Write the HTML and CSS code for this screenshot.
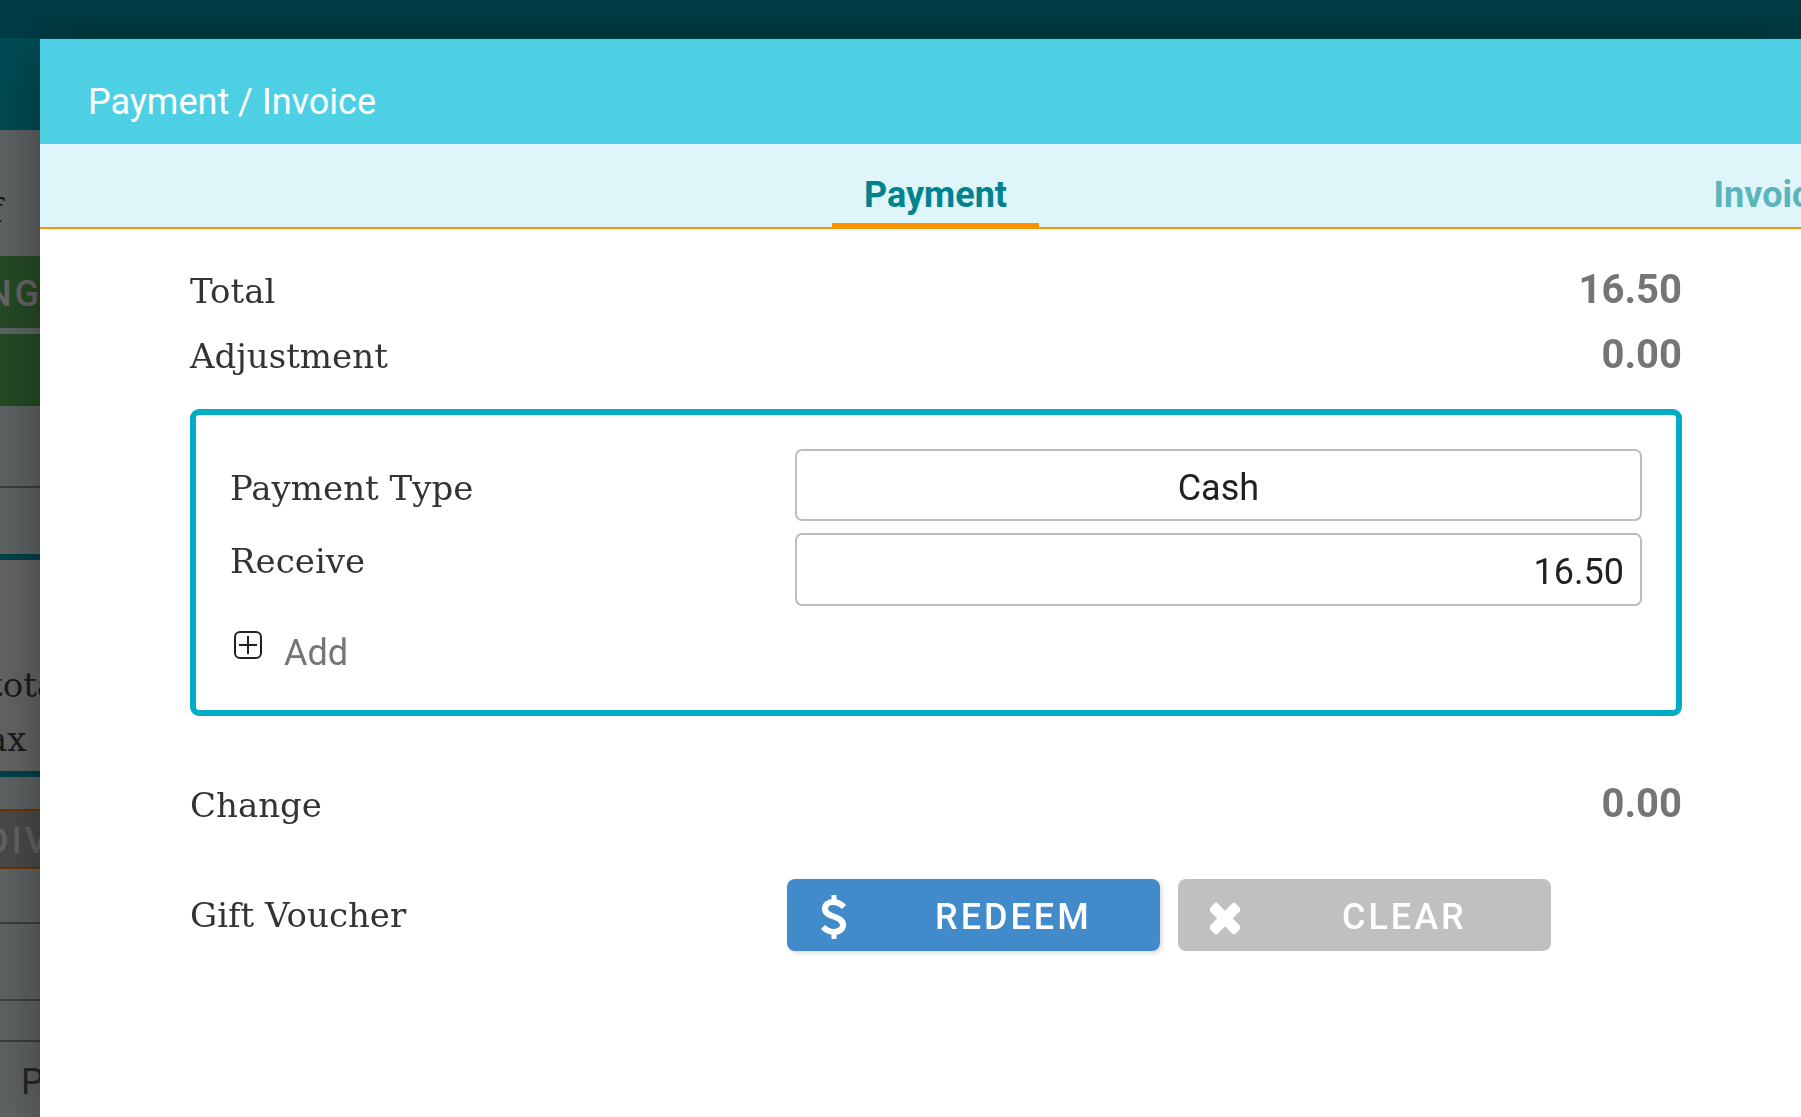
FILE: index.html
```html
<!DOCTYPE html>
<html lang="en">

<head>
    <meta charset="UTF-8">
    <title>Payment / Invoice</title>
    <link rel="stylesheet" href="styles.css">
</head>

<body>
    <!-- order page behind the dialog -->
    <div class="page">
        <div class="page-status"></div>
        <div class="page-nav"></div>
        <div class="page-side">
            <div class="side-title">f</div>
            <div class="side-green">NG</div>
            <div class="side-green"></div>
            <div class="side-row side-row-first"></div>
            <div class="side-row side-row-second"></div>
            <div class="side-total">
                <div>tota</div>
                <div class="side-tax">ax</div>
            </div>
            <div class="side-divide">DIV</div>
            <div class="side-row side-row-top"></div>
            <div class="side-row side-row-mid"></div>
            <div class="side-row side-row-low"></div>
            <div class="side-print">P</div>
        </div>
    </div>

    <!-- payment dialog -->
    <div class="modal" role="dialog" aria-labelledby="title">
        <h1 id="title" class="modal-title">Payment / Invoice</h1>
        <nav class="tabs">
            <div class="tab"><a href="#payment" class="tab-link active">Payment</a></div>
            <div class="tab"><a href="#invoice" class="tab-link">Invoice</a></div>
        </nav>
        <form id="payment" class="payment">
            <div class="row">
                <span class="label">Total</span>
                <span class="amount">16.50</span>
            </div>
            <div class="row">
                <span class="label">Adjustment</span>
                <span class="amount">0.00</span>
            </div>
            <div class="pay-box">
                <div class="field">
                    <label for="type" class="label label-type">Payment Type</label>
                    <select id="type" class="input input-type">
                        <option>Cash</option>
                    </select>
                </div>
                <div class="field">
                    <label for="receive" class="label label-receive">Receive</label>
                    <input type="text" id="receive" class="input input-receive" value="16.50">
                </div>
                <button type="button" class="add">
                    <svg class="add-icon" viewBox="0 0 30 30" fill="none" stroke="#212121" stroke-width="2">
                        <rect x="2" y="2" width="26" height="26" rx="5" />
                        <path d="M15 6v18M6 15h18" />
                    </svg>
                    Add
                </button>
            </div>
            <div class="row row-change">
                <span class="label">Change</span>
                <span class="amount">0.00</span>
            </div>
            <div class="voucher">
                <span class="label voucher-label">Gift Voucher</span>
                <button type="button" class="btn btn-redeem">
                    <svg class="btn-icon" viewBox="0 0 30 44" fill="none" stroke="#fff">
                        <path d="M15 0v8M15 36v8" stroke-width="5" />
                        <path d="M25 12C21 8 17 7 14 7C9 7 6 10 6 14C6 23 24 20 24 30C24 34 20 37 15 37C10 37 7 35 4 32" stroke-width="6" />
                    </svg>
                    <span class="btn-text">REDEEM</span>
                </button>
                <button type="button" class="btn btn-clear">
                    <svg class="btn-icon" viewBox="0 0 30 44" fill="#fff">
                        <rect x="-3" y="18" width="36" height="11" rx="2" transform="rotate(45 15 23.5)" />
                        <rect x="-3" y="18" width="36" height="11" rx="2" transform="rotate(-45 15 23.5)" />
                    </svg>
                    <span class="btn-text">CLEAR</span>
                </button>
            </div>
        </form>
    </div>
</body>

</html>
```

FILE: styles.css
```css
* {
    box-sizing: border-box;
    margin: 0;
    padding: 0;
}

body {
    font-family: Roboto, "Liberation Sans", sans-serif;
    font-size: 36px;
    color: #212121;
    background: #606565;
    overflow: hidden;
}

/* page behind */
.page {
    height: 100vh;
    overflow: hidden;
}

.page-status {
    height: 38px;
    background: #003c44;
}

.page-nav {
    height: 92px;
    background: #004c55;
}

.page-side {
    width: 40px;
    overflow: hidden;
    white-space: nowrap;
}

.side-title {
    height: 126px;
    padding-top: 60px;
    font-family: "American Typewriter", "DejaVu Serif", serif;
    font-size: 34px;
    line-height: 40px;
    text-indent: -10px;
    color: #151515;
}

.side-green {
    height: 72px;
    margin-bottom: 6px;
    background: #264c25;
    color: #686868;
    font-weight: 500;
    line-height: 76px;
    letter-spacing: 3px;
    text-indent: -14px;
}

.side-row {
    border-bottom: 2px solid #3e4141;
}

.side-row-first {
    height: 76px;
}

.side-row-second {
    height: 66px;
    border: 0;
}

.side-total {
    height: 223px;
    padding-top: 98px;
    border-top: 6px solid #00434b;
    border-bottom: 6px solid #00434b;
    background: #666;
    font-family: "American Typewriter", "DejaVu Serif", serif;
    font-size: 34px;
    line-height: 54px;
    text-indent: -11px;
    color: #1c1c1c;
}

.side-tax {
    text-indent: -13px;
}

.side-divide {
    height: 60px;
    margin-top: 32px;
    border-top: 2px solid #6c3700;
    border-bottom: 2px solid #6c3700;
    background: #4c4c4c;
    color: #666;
    font-weight: 500;
    line-height: 60px;
    letter-spacing: 3px;
    text-indent: -15px;
}

.side-row-top {
    height: 55px;
}

.side-row-mid {
    height: 77px;
}

.side-row-low {
    height: 41px;
}

.side-print {
    padding-left: 21px;
    line-height: 80px;
    color: #252727;
}

/* dialog */
.modal {
    position: fixed;
    top: 39px;
    right: 0;
    bottom: 0;
    left: 40px;
    overflow: hidden auto;
    background: #fff;
    box-shadow: 0 12px 60px rgba(0, 0, 0, .4);
}

.modal-title {
    height: 105px;
    padding: 22px 48px 0 48px;
    background: #4dd0e3;
    color: #fff;
    font-size: 36px;
    font-weight: 400;
    line-height: 83px;
}

/* the second tab runs off the right side */
.tabs {
    display: flex;
    height: 85px;
    overflow: hidden;
    border-bottom: 2px solid #ff9100;
    background: #def6f9;
}

.tab {
    display: flex;
    flex: 0 0 47.5%;
    justify-content: center;
}

.tab:first-child {
    margin-left: 27.1%;
}

.tab-link {
    padding: 18px 32px 0 32px;
    color: #5bb3bc;
    font-weight: 700;
    line-height: 66px;
    text-decoration: none;
}

.tab-link.active {
    height: 83px;
    border-bottom: 4px solid #ff9100;
    color: #00838f;
}

.payment {
    padding: 29px 119px 40px 150px;
}

.row {
    display: flex;
    align-items: baseline;
    justify-content: space-between;
    line-height: 64px;
}

.label {
    font-family: "American Typewriter", "DejaVu Serif", serif;
    font-size: 34px;
    color: #333;
}

.amount {
    color: #757575;
    font-size: 40px;
    font-weight: 700;
}

.pay-box {
    display: flex;
    flex-direction: column;
    gap: 6px;
    margin-top: 21px;
    padding: 34px;
    border: 6px solid #00acc1;
    border-radius: 9px;
}

.field {
    display: grid;
    grid-template-columns: 2fr 3fr;
    align-items: start;
}

.label-type {
    padding: 3px 0;
    line-height: 72px;
}

.label-receive {
    line-height: 56px;
}

.input {
    width: 100%;
    height: 72px;
    padding: 4px 16px 0 16px;
    border: 2px solid #bdbdbd;
    border-radius: 7px;
    background: #fff;
    color: #212121;
    font-family: inherit;
    font-size: 36px;
}

.input-type {
    padding-top: 6px;
    appearance: none;
    text-align: center;
    text-align-last: center;
}

.input-receive {
    height: 73px;
    text-align: right;
}

.add {
    display: flex;
    align-self: flex-start;
    align-items: flex-start;
    gap: 21px;
    margin-top: 18px;
    padding-left: 3px;
    border: 0;
    background: none;
    color: #757575;
    font-family: inherit;
    font-size: 36px;
    line-height: 46px;
}

.add-icon {
    width: 30px;
    height: 30px;
}

.row-change {
    margin-top: 56px;
}

.voucher {
    display: flex;
    align-items: center;
    margin-top: 42px;
}

.voucher-label {
    flex: 0 0 40%;
}

.btn {
    display: flex;
    flex: 0 0 25%;
    align-items: center;
    height: 72px;
    margin-right: 18px;
    padding: 3px 0 0 32px;
    border: 0;
    border-radius: 8px;
    color: #fff;
    font-family: inherit;
    font-size: 36px;
    font-weight: 500;
    letter-spacing: 3px;
}

.btn-redeem {
    background: #428bca;
    box-shadow: 2px 2px 4px rgba(0, 0, 0, .15);
}

.btn-clear {
    background: #c0c0c0;
}

.btn-icon {
    width: 30px;
    height: 44px;
}

.btn-text {
    flex: 1;
    padding-left: 18px;
    text-align: center;
}
```
